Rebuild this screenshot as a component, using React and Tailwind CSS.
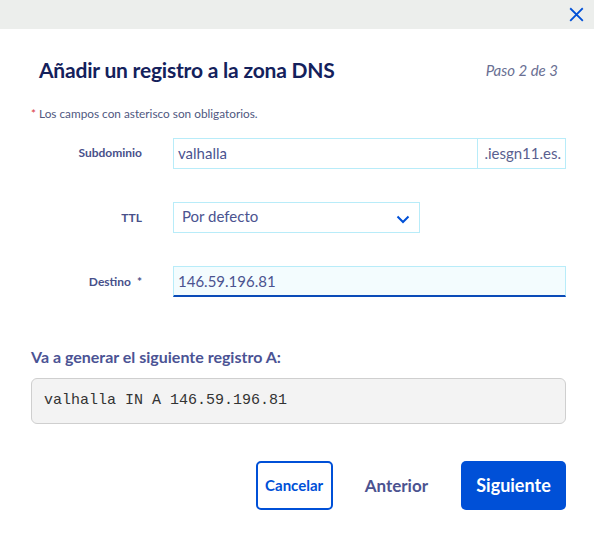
export default function App() {
  return (
    <div className="w-[594px] h-[534px] bg-white overflow-hidden font-['Lato','Liberation_Sans',sans-serif]">
      {/* Top bar */}
      <div className="h-[29px] bg-[#eceeec] flex items-center justify-end pr-[10px]">
        <svg width="15" height="15" viewBox="0 0 16 16" className="text-[#0050d7]">
          <path d="M2 2 L14 14 M14 2 L2 14" stroke="currentColor" strokeWidth="2" strokeLinecap="square" />
        </svg>
      </div>

      {/* Header */}
      <div className="flex items-center justify-between pl-[39px] pr-[36px] mt-[27px] h-[28px]">
        <h1 className="text-[21px] font-bold text-[#14215c] tracking-[-0.2px]">Añadir un registro a la zona DNS</h1>
        <span className="text-[15px] italic text-[#6a6f93]">Paso 2 de 3</span>
      </div>

      <p className="pl-[31px] mt-[23px] text-[11.8px] leading-[14px] text-[#50587f]">
        <span className="text-[#d9363e]">*</span> Los campos con asterisco son obligatorios.
      </p>

      {/* Form */}
      <div className="mt-[17px] flex flex-col gap-[33px]">
        <div className="flex items-center h-[31px]">
          <label className="w-[142px] text-right text-[12px] font-bold text-[#48508a] -mt-[2px]">Subdominio</label>
          <div className="ml-[31px] flex h-full">
            <div className="w-[305px] border border-[#b8ecf9] flex items-center px-[4px] text-[15px] text-[#4b5390]">valhalla</div>
            <div className="w-[88px] border border-l-0 border-[#b8ecf9] flex items-center justify-end pr-[4px] text-[15px] text-[#5a6090]">.iesgn11.es.</div>
          </div>
        </div>

        <div className="flex items-center h-[31px]">
          <label className="w-[142px] text-right text-[12px] font-bold text-[#48508a]">TTL</label>
          <div className="ml-[31px] w-[247px] h-full border border-[#b8ecf9] flex items-center justify-between pl-[8px] pr-[9px] text-[15px] text-[#4b5390]">
            <span className="-mt-[3px]">Por defecto</span>
            <svg width="14" height="9" viewBox="0 0 14 9" className="mt-[3px]">
              <path d="M1.5 1.5 L7 7 L12.5 1.5" fill="none" stroke="#0050d7" strokeWidth="2" />
            </svg>
          </div>
        </div>

        <div className="flex items-center h-[31px]">
          <label className="w-[142px] text-right text-[12px] font-bold text-[#48508a]">
            Destino <span className="ml-[3px]">*</span>
          </label>
          <div className="ml-[31px] w-[393px] h-full bg-[#f3fcfe] border border-[#b8ecf9] border-b-2 border-b-[#0a4bb8] flex items-center px-[4px] text-[15px] text-[#4b5390]">
            146.59.196.81
          </div>
        </div>
      </div>

      {/* Preview */}
      <div className="px-[31px] mt-[50px]">
        <h2 className="text-[16px] font-bold text-[#4b5394] leading-[20px]">Va a generar el siguiente registro A:</h2>
        <div className="mt-[11px] w-[535px] h-[46px] bg-[#f3f3f3] border border-[#cfcfcf] rounded-[6px] flex items-center px-[12px] font-['Liberation_Mono',monospace] text-[15px] text-[#333]">
          valhalla IN A 146.59.196.81
        </div>
      </div>

      {/* Actions */}
      <div className="mt-[37px] flex items-center justify-end pr-[28px] h-[49px]">
        <button className="w-[77px] h-[49px] border-2 border-[#0050d7] rounded-[5px] text-[15px] font-bold text-[#0050d7]">Cancelar</button>
        <button className="ml-[32px] text-[17px] font-bold text-[#4b5390]">Anterior</button>
        <button className="ml-[33px] w-[105px] h-[49px] bg-[#0050d7] rounded-[5px] text-[18px] font-bold text-white">Siguiente</button>
      </div>
    </div>
  );
}
